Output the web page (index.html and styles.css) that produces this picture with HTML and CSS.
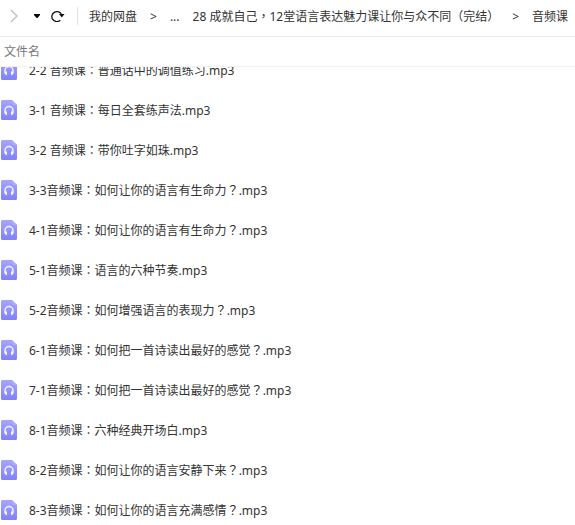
FILE: index.html
```html
<!DOCTYPE html>
<html lang="zh-CN">
<head>
    <meta charset="UTF-8">
    <meta name="viewport" content="width=device-width, initial-scale=1.0">
    <title>我的网盘</title>
    <link rel="stylesheet" href="styles.css">
</head>
<body>
    <svg class="defs" width="0" height="0" aria-hidden="true">
        <defs>
            <linearGradient id="audioBg" x1="0" y1="0" x2="0" y2="1">
                <stop offset="0" stop-color="#a6a6ff"/>
                <stop offset="1" stop-color="#8080fa"/>
            </linearGradient>
        </defs>
        <symbol id="audio" viewBox="0 0 16 20">
            <path fill="url(#audioBg)" d="M1.500 0H11l5 5v13.500a1.500 1.500 0 0 1-1.500 1.500h-13A1.500 1.500 0 0 1 0 18.500v-17A1.500 1.500 0 0 1 1.500 0z"/>
            <path fill="#acacff" d="M11 0l5 5h-3.500A1.500 1.500 0 0 1 11 3.500z"/>
            <path fill="none" stroke="#f4f4ff" stroke-width="1.500" d="M4 13.500v-3a4 4 0 0 1 8 0v3"/>
            <path fill="#f4f4ff" d="M4 11.500h2v3.500H5l-1-1zM10 11.500h2V14l-1 1h-1z"/>
        </symbol>
    </svg>

    <div class="toolbar">
        <button class="tool-btn forward" aria-label="前进">
            <svg width="8" height="14" viewBox="0 0 8 14"><path d="M1 1l6 6-6 6" fill="none" stroke="#bbb" stroke-width="1.300"/></svg>
        </button>
        <button class="tool-btn history" aria-label="历史">
            <svg width="6" height="4" viewBox="0 0 6 4"><path d="M0 0h6v1L3.500 4h-1L0 1z"/></svg>
        </button>
        <button class="tool-btn refresh" aria-label="刷新">
            <svg width="14" height="12" viewBox="0 0 14 12"><path d="M9.300 10.200A5 5 0 1 1 10.600 5" fill="none" stroke="#111" stroke-width="1.300"/><path d="M8 4h5.500l-2.700 3.400z" fill="#111"/></svg>
        </button>
        <nav class="breadcrumb">
            <a href="#">我的网盘</a>
            <span>&gt;</span>
            <a href="#">...</a>
            <a href="#">28 成就自己<span class="mark" lang="zh-TW">，</span>12堂语言表达魅力课让你与众不同<span class="mark" lang="zh-TW">（</span>完结<span class="mark" lang="zh-TW">）</span></a>
            <span>&gt;</span>
            <a href="#">音频课</a>
        </nav>
    </div>

    <div class="list-header">文件名</div>

    <div class="list-view">
        <ul class="file-list">
            <li><svg class="file-icon"><use href="#audio"/></svg><a href="#">2-2 音频课<span class="mark" lang="zh-TW">：</span>普通话中的调值练习.mp3</a></li>
            <li><svg class="file-icon"><use href="#audio"/></svg><a href="#">3-1 音频课<span class="mark" lang="zh-TW">：</span>每日全套练声法.mp3</a></li>
            <li><svg class="file-icon"><use href="#audio"/></svg><a href="#">3-2 音频课<span class="mark" lang="zh-TW">：</span>带你吐字如珠.mp3</a></li>
            <li><svg class="file-icon"><use href="#audio"/></svg><a href="#">3-3音频课<span class="mark" lang="zh-TW">：</span>如何让你的语言有生命力<span class="mark" lang="zh-TW">？</span>.mp3</a></li>
            <li><svg class="file-icon"><use href="#audio"/></svg><a href="#">4-1音频课<span class="mark" lang="zh-TW">：</span>如何让你的语言有生命力<span class="mark" lang="zh-TW">？</span>.mp3</a></li>
            <li><svg class="file-icon"><use href="#audio"/></svg><a href="#">5-1音频课<span class="mark" lang="zh-TW">：</span>语言的六种节奏.mp3</a></li>
            <li><svg class="file-icon"><use href="#audio"/></svg><a href="#">5-2音频课<span class="mark" lang="zh-TW">：</span>如何增强语言的表现力<span class="mark" lang="zh-TW">？</span>.mp3</a></li>
            <li><svg class="file-icon"><use href="#audio"/></svg><a href="#">6-1音频课<span class="mark" lang="zh-TW">：</span>如何把一首诗读出最好的感觉<span class="mark" lang="zh-TW">？</span>.mp3</a></li>
            <li><svg class="file-icon"><use href="#audio"/></svg><a href="#">7-1音频课<span class="mark" lang="zh-TW">：</span>如何把一首诗读出最好的感觉<span class="mark" lang="zh-TW">？</span>.mp3</a></li>
            <li><svg class="file-icon"><use href="#audio"/></svg><a href="#">8-1音频课<span class="mark" lang="zh-TW">：</span>六种经典开场白.mp3</a></li>
            <li><svg class="file-icon"><use href="#audio"/></svg><a href="#">8-2音频课<span class="mark" lang="zh-TW">：</span>如何让你的语言安静下来<span class="mark" lang="zh-TW">？</span>.mp3</a></li>
            <li><svg class="file-icon"><use href="#audio"/></svg><a href="#">8-3音频课<span class="mark" lang="zh-TW">：</span>如何让你的语言充满感情<span class="mark" lang="zh-TW">？</span>.mp3</a></li>
        </ul>
    </div>
</body>
</html>
```

FILE: styles.css
```css
* {
    box-sizing: border-box;
}
body {
    display: flex;
    flex-direction: column;
    height: 100vh;
    margin: 0;
    overflow: hidden;
    background-color: #fff;
    color: #333;
    font-family: "Noto Sans", "Noto Sans CJK SC", sans-serif;
    font-size: 12px;
    line-height: 20px;
}
a {
    color: inherit;
    text-decoration: none;
}
a:hover {
    color: #06a7ff;
}
.defs {
    position: absolute;
}
/* centred full-width punctuation */
.mark {
    font-family: "Noto Sans CJK TC", sans-serif;
    line-height: 1;
}

.toolbar {
    display: flex;
    flex: none;
    align-items: center;
    height: 37px;
    padding: 0 0 4px 10px;
    border-bottom: 1px solid #ebebeb;
}
.tool-btn {
    display: flex;
    padding: 0;
    border: none;
    background: none;
    cursor: pointer;
}
.history {
    margin-left: 16px;
}
.refresh {
    margin-left: 11px;
}

.breadcrumb {
    display: flex;
    gap: 13px;
    margin-left: 12px;
    padding: 2px 0 0 11px;
    border-left: 1px solid #e0e0e0;
    line-height: 16px;
    white-space: nowrap;
}

.list-header {
    flex: none;
    height: 30px;
    padding: 5px 4px;
    border-bottom: 1px solid #f2f2f2;
    color: #777;
}

.list-view {
    flex: 1;
    min-height: 0;
    overflow: hidden;
}
/* list is scrolled part of a row down */
.file-list {
    margin: -17px 0 0;
    padding: 0;
    list-style: none;
}
.file-list li {
    display: flex;
    align-items: center;
    gap: 12px;
    height: 40px;
    padding-left: 1px;
    white-space: nowrap;
}
.file-list a {
    padding-top: 2px;
}
.file-icon {
    flex: none;
    width: 16px;
    height: 20px;
}
```
